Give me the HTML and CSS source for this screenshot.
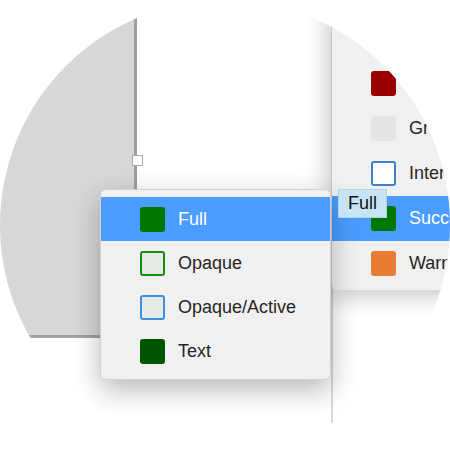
FILE: index.html
```html
<!DOCTYPE html>
<html lang="en">
<head>
    <meta charset="UTF-8">
    <title>Color menu</title>
    <link rel="stylesheet" href="styles.css">
</head>
<body>
<div class="stage">
    <div class="side-panel"></div>
    <div class="handle"></div>
    <div class="divider"></div>

    <div class="menu menu-back">
        <div class="item"><span class="swatch danger"></span>Danger</div>
        <div class="item"><span class="swatch grey"></span>Grey</div>
        <div class="item"><span class="swatch interactive"></span>Interactive</div>
        <div class="item active"><span class="swatch full"></span>Success</div>
        <div class="item"><span class="swatch warning"></span>Warning</div>
    </div>

    <div class="menu menu-front">
        <div class="item active"><span class="swatch full"></span>Full</div>
        <div class="item"><span class="swatch opaque"></span>Opaque</div>
        <div class="item"><span class="swatch opaque-active"></span>Opaque/Active</div>
        <div class="item"><span class="swatch text"></span>Text</div>
    </div>

    <div class="tooltip">Full</div>
</div>
</body>
</html>
```

FILE: styles.css
```css
body {
    margin: 0;
    background: #fff;
    font-family: "Liberation Sans", Arial, sans-serif;
}

.stage {
    position: relative;
    width: 450px;
    height: 450px;
    border-radius: 50%;
    overflow: hidden;
    background: #fff;
}

.side-panel {
    position: absolute;
    left: -20px;
    top: -20px;
    width: 154px;
    height: 355px;
    background: #d7d7d7;
    border-right: 3px solid #9d9d9d;
    border-bottom: 3px solid #a2a2a2;
}

.handle {
    position: absolute;
    left: 132px;
    top: 155px;
    width: 9px;
    height: 9px;
    background: #fff;
    border: 1px solid #a8a8a8;
}

.divider {
    position: absolute;
    left: 331px;
    top: 0;
    width: 2px;
    height: 450px;
    background: #dadada;
}

.menu {
    position: absolute;
    background: #f0f0f0;
    color: #262626;
    font-size: 18px;
}

.menu-back {
    left: 331px;
    top: -40px;
    width: 160px;
    padding: 101px 0 4px;
    border-radius: 0 0 0 5px;
    border-left: 1px solid #c9c9c9;
    box-shadow: -4px 6px 22px rgba(0, 0, 0, 0.22);
}

.menu-back .item {
    height: 45px;
    padding-left: 39px;
}

.menu-front {
    left: 100px;
    top: 189px;
    width: 231px;
    padding: 7px 0 8px;
    border-radius: 6px;
    border: 1px solid #d2d2d2;
    box-sizing: border-box;
    height: 191px;
    box-shadow: 0 10px 28px rgba(0, 0, 0, 0.28);
}

.menu-front .item {
    height: 44px;
    padding-left: 39px;
}

.item {
    display: flex;
    align-items: center;
    gap: 13px;
    white-space: nowrap;
}

.item.active {
    background: #4a9cff;
    color: #fff;
}

.swatch {
    width: 25px;
    height: 25px;
    border-radius: 3px;
    box-sizing: border-box;
    flex-shrink: 0;
}

.swatch.full { background: #007800; }
.swatch.opaque { background: #e6ebe6; border: 2px solid #168d16; }
.swatch.opaque-active { background: #e6ebe6; border: 2px solid #3b8fe4; }
.swatch.text { background: #005500; }
.swatch.danger { background: #990000; }
.swatch.grey { background: #e4e4e4; }
.swatch.interactive { background: #fff; border: 2px solid #3b80c8; }
.swatch.warning { background: #e87c35; }

.tooltip {
    position: absolute;
    left: 338px;
    top: 189px;
    width: 49px;
    height: 29px;
    box-sizing: border-box;
    background: #c6e4f4;
    border: 1px solid #b3d2e4;
    color: #111;
    font-size: 18px;
    line-height: 27px;
    text-align: center;
}
```
